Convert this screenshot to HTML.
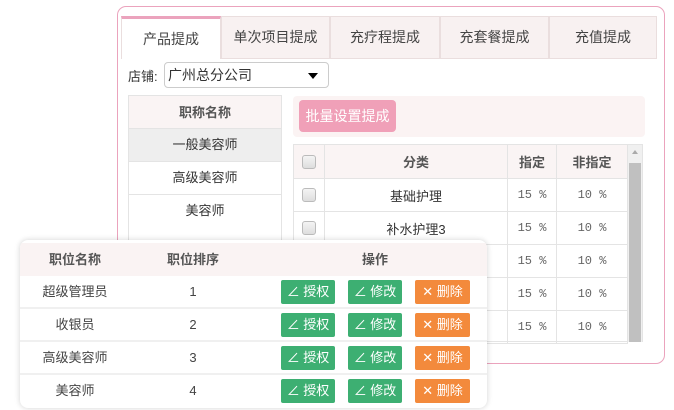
<!DOCTYPE html>
<html><head><meta charset="utf-8"><style>
*{box-sizing:border-box;margin:0;padding:0}
body{width:674px;height:410px;background:#fff;position:relative;overflow:hidden;font-family:"Liberation Sans","Noto Sans CJK SC",sans-serif;font-size:13px;color:#333}
.a{position:absolute}
.panel{left:117px;top:6px;width:548px;height:358px;border:1.5px solid #eba3bd;border-radius:9px}
.tab{top:16px;height:43px;line-height:41px;text-align:center;font-size:14px;color:#444;background:#f8f1f1;border:1px solid #eadede}
.c{text-align:center}
.cell{border:1px solid #e4e4e4;text-align:center}
.cb{width:14px;height:14px;border:1px solid #bbb;border-radius:3px;background:linear-gradient(#f4f4f4,#ddd)}
.btn{position:absolute;top:4px;height:24px;line-height:24px;color:#fff;font-size:13px;border-radius:2px;text-align:center}
.g{background:#3daf72}.o{background:#f38a3c}
.m{font-family:'Liberation Mono',monospace;font-size:12px;color:#666}
</style></head><body>
<div class="a panel"></div>
<div class="a tab" style="left:121px;width:100px;background:#fff;border-top:3px solid #eba3bd;border-bottom:none">产品提成</div>
<div class="a tab" style="left:221px;width:109px">单次项目提成</div>
<div class="a tab" style="left:330px;width:110px">充疗程提成</div>
<div class="a tab" style="left:440px;width:109px">充套餐提成</div>
<div class="a tab" style="left:549px;width:108px">充值提成</div>
<div class="a" style="left:128px;top:66px;font-size:13px">店铺:</div>
<div class="a" style="left:164px;top:62px;width:165px;height:26px;border:1px solid #ccc;border-radius:4px;line-height:24px;padding-left:3px;font-size:14px">广州总分公司<span class="a" style="right:10px;top:10px;border-left:5px solid transparent;border-right:5px solid transparent;border-top:6px solid #000;width:0;height:0"></span></div>
<div class="a cell" style="left:128px;top:95px;width:154px;height:34px;line-height:33px;background:#faf4f4;font-weight:bold;color:#555">职称名称</div>
<div class="a cell" style="left:128px;top:128px;width:154px;height:34px;line-height:32px;background:#eee">一般美容师</div>
<div class="a cell" style="left:128px;top:161px;width:154px;height:34px;line-height:32px">高级美容师</div>
<div class="a cell" style="left:128px;top:194px;width:154px;height:50px;line-height:32px;border-bottom:none">美容师</div>
<div class="a" style="left:293px;top:96px;width:352px;height:41px;background:#fbf3f3;border-radius:4px"></div>
<div class="a" style="left:299px;top:100px;width:97px;height:32px;background:#f0a0b8;border-radius:4px;color:#fff;line-height:32px;text-align:center;font-size:14px">批量设置提成</div>
<div class="a" style="left:293px;top:144px;width:350px;height:198px;border:1px solid #e4e4e4;background:#fff"></div>
<div class="a" style="left:628px;top:145px;width:14px;height:197px;background:#f0f0f0"></div>
<div class="a" style="left:629px;top:163px;width:12px;height:179px;background:#c0c0c0"></div>
<div class="a" style="left:632px;top:150px;border-left:3px solid transparent;border-right:3px solid transparent;border-bottom:4px solid #aaa"></div>
<div class="a" style="left:293px;top:144px;width:335px">
<table style="border-collapse:collapse;width:335px;font-size:13px">
<tr style="height:34px;background:#faf4f4;font-weight:bold;color:#555"><td class="cell" style="width:31px"><div class="cb" style="margin:auto"></div></td><td class="cell" style="width:183px">分类</td><td class="cell" style="width:49px">指定</td><td class="cell">非指定</td></tr>
<tr style="height:33px"><td class="cell"><div class="cb" style="margin:auto"></div></td><td class="cell">基础护理</td><td class="cell m">15 %</td><td class="cell m">10 %</td></tr>
<tr style="height:33px"><td class="cell"><div class="cb" style="margin:auto"></div></td><td class="cell">补水护理3</td><td class="cell m">15 %</td><td class="cell m">10 %</td></tr>
<tr style="height:33px"><td class="cell"></td><td class="cell"></td><td class="cell m">15 %</td><td class="cell m">10 %</td></tr>
<tr style="height:33px"><td class="cell"></td><td class="cell"></td><td class="cell m">15 %</td><td class="cell m">10 %</td></tr>
<tr style="height:33px"><td class="cell"></td><td class="cell"></td><td class="cell m">15 %</td><td class="cell m">10 %</td></tr>
</table></div>
<div class="a" style="left:20px;top:240px;width:467px;height:168px;background:#fff;border-radius:8px;box-shadow:0 0 6px rgba(0,0,0,.18);overflow:hidden">
<div class="a" style="left:0;top:3px;width:467px;height:33px;background:#faf3f3;font-weight:bold;color:#555;line-height:33px">
<span class="a c" style="left:15px;width:80px">职位名称</span><span class="a c" style="left:133px;width:80px">职位排序</span><span class="a c" style="left:315px;width:80px">操作</span></div>
<div class="a" style="left:0;top:36px;width:467px;color:#444">
<div style="position:relative;height:33px;line-height:31px;border-bottom:2px solid #f0f0f0"><span class="a c" style="left:5px;width:100px">超级管理员</span><span class="a c" style="left:153px;width:40px">1</span><span class="btn g" style="left:261px;width:54px">∠ 授权</span><span class="btn g" style="left:328px;width:54px">∠ 修改</span><span class="btn o" style="left:395px;width:55px">✕ 删除</span></div>
<div style="position:relative;height:33px;line-height:31px;border-bottom:2px solid #f0f0f0"><span class="a c" style="left:5px;width:100px">收银员</span><span class="a c" style="left:153px;width:40px">2</span><span class="btn g" style="left:261px;width:54px">∠ 授权</span><span class="btn g" style="left:328px;width:54px">∠ 修改</span><span class="btn o" style="left:395px;width:55px">✕ 删除</span></div>
<div style="position:relative;height:33px;line-height:31px;border-bottom:2px solid #f0f0f0"><span class="a c" style="left:5px;width:100px">高级美容师</span><span class="a c" style="left:153px;width:40px">3</span><span class="btn g" style="left:261px;width:54px">∠ 授权</span><span class="btn g" style="left:328px;width:54px">∠ 修改</span><span class="btn o" style="left:395px;width:55px">✕ 删除</span></div>
<div style="position:relative;height:33px;line-height:31px"><span class="a c" style="left:5px;width:100px">美容师</span><span class="a c" style="left:153px;width:40px">4</span><span class="btn g" style="left:261px;width:54px">∠ 授权</span><span class="btn g" style="left:328px;width:54px">∠ 修改</span><span class="btn o" style="left:395px;width:55px">✕ 删除</span></div>
</div></div>
</body></html>
